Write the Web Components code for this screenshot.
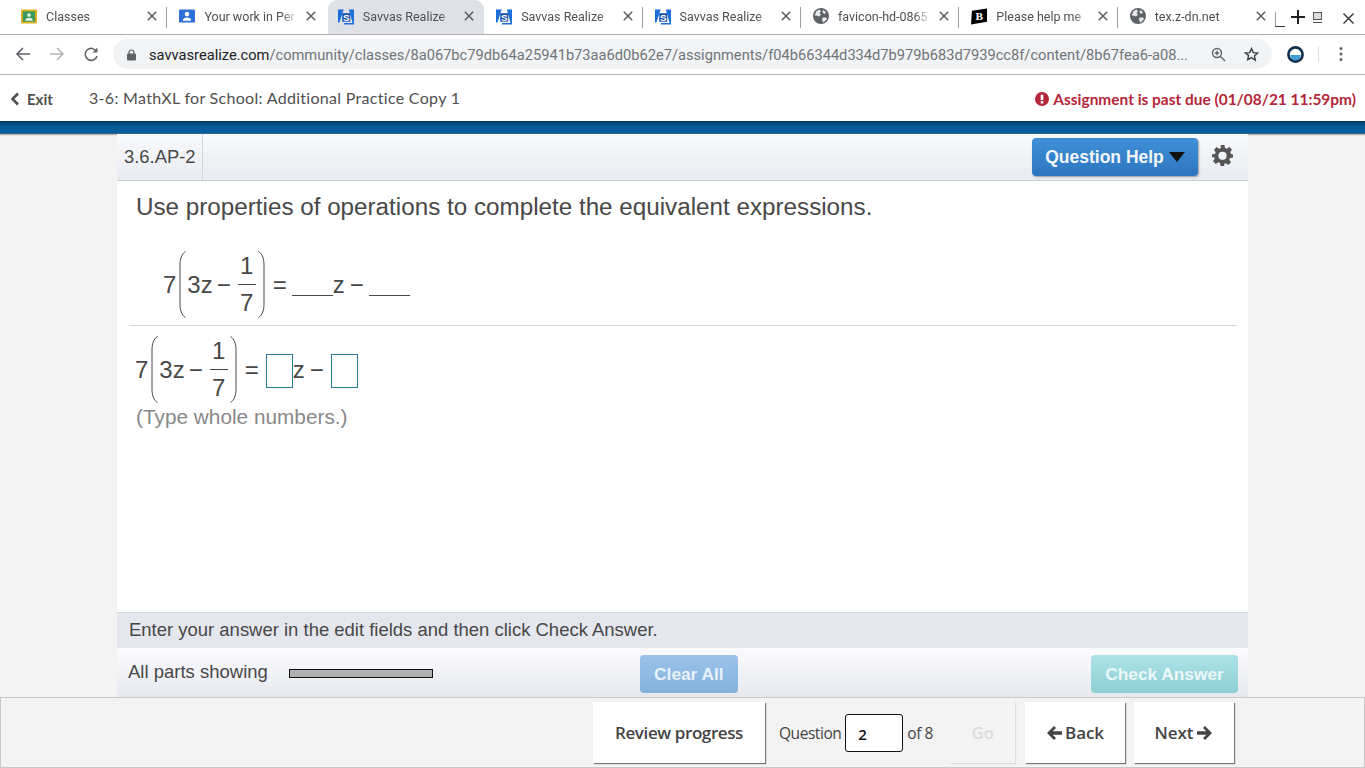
<!DOCTYPE html>
<html lang="en">
<head>
<meta charset="utf-8">
<title>Savvas Realize</title>
<style>
  html, body { margin: 0; height: 768px; overflow: hidden; background: #f3f3f3; }
  body { display: flex; flex-direction: column; font-family: "Liberation Sans", sans-serif; }
</style>
</head>
<body>
  <browser-tabs></browser-tabs>
  <browser-toolbar url-host="savvasrealize.com" url-path="/community/classes/8a067bc79db64a25941b73aa6d0b62e7/assignments/f04b66344d334d7b979b683d7939cc8f/content/8b67fea6-a08..."></browser-toolbar>
  <assignment-header title="3-6: MathXL for School: Additional Practice Copy 1" due="Assignment is past due (01/08/21 11:59pm)"></assignment-header>
  <question-panel code="3.6.AP-2">
    <math-line style="--indent: 28px">
      <math-blank></math-blank><span>z</span><span class="op">−</span><math-blank></math-blank>
    </math-line>
    <math-line slot="answer">
      <math-box></math-box><span>z</span><span class="op">−</span><math-box></math-box>
    </math-line>
  </question-panel>
  <bottom-nav></bottom-nav>

<script>
const ICONS = {
  classroom: `<svg viewBox="0 0 17 15" width="17" height="15"><rect width="17" height="15" rx="1" fill="#e0b020"/><rect x="2" y="2" width="13" height="11" fill="#3a9a5c"/><circle cx="8.500" cy="6" r="1.900" fill="#e8f4ea"/><path d="M4.500 12c0-2.200 1.800-3.200 4-3.200s4 1 4 3.200z" fill="#e8f4ea"/></svg>`,
  person: `<svg viewBox="0 0 17 14" width="17" height="14"><rect width="17" height="14" rx="1" fill="#2f6fd6"/><circle cx="8.500" cy="5" r="2.400" fill="#fff"/><path d="M4 12c0-2.300 2.200-3.400 4.500-3.400S13 9.700 13 12z" fill="#fff"/></svg>`,
  savvas: `<svg viewBox="0 0 17 17" width="17" height="17"><path d="M0 1h6L1.500 15H0z" fill="#1b6fd8"/><path d="M11.500 1H17v16H6l.5-1.500H15.500z" fill="#1b6fd8"/><rect x="4.500" y="5" width="8.500" height="9" fill="#1a50ad"/><text x="8.700" y="13" font-family="Liberation Sans" font-weight="700" font-size="10.500" text-anchor="middle" fill="#fff">S</text></svg>`,
  globe: `<svg viewBox="0 0 16 16" width="16" height="16"><circle cx="8" cy="8" r="8" fill="#5f6368"/><path d="M3.500 3 6.500 1.500 8 3 6.500 5 8 6.500 6 8.500 3.500 7.500 1.700 7.500zM9.500 9.500h3.500l1 1.500L10.500 14.500 9 12zM10 2l3 2-1.500 2L9.500 4.500z" fill="#e8eaed"/></svg>`,
  brainly: `<svg viewBox="0 0 17 17" width="17" height="17"><path d="M1 2.500 17 0v14L0 17z" fill="#000"/><text x="8.800" y="12.500" font-family="Liberation Serif" font-weight="700" font-size="12" text-anchor="middle" fill="#fff">B</text></svg>`,
  close: `<svg viewBox="0 0 10 10" width="10" height="10"><path d="M.8.800 9.200 9.200M9.200.8.800 9.200" stroke="#5a5d60" stroke-width="1.500" fill="none"/></svg>`,
  gear: `<svg viewBox="0 0 24 24" width="23" height="23"><path fill="#555" fill-rule="evenodd" d="M10 1h4l.6 3.100 1.900.8 2.600-1.800 2.800 2.800-1.800 2.600.8 1.900L23 11v3l-3.100.6-.8 1.900 1.800 2.600-2.800 2.800-2.600-1.800-1.900.8L14 23h-4l-.6-3.100-1.900-.8-2.600 1.800-2.800-2.800 1.800-2.600-.8-1.900L1 14v-3l3.100-.6.800-1.900L3.100 5.900l2.800-2.800 2.600 1.800 1.900-.8zM12 8a4.300 4.300 0 1 0 0 8.600A4.300 4.300 0 0 0 12 8z"/></svg>`
};

class BrowserTabs extends HTMLElement {
  connectedCallback() {
    const tabs = [
      ['classroom', 'Classes'],
      ['person', 'Your work in Per'],
      ['savvas', 'Savvas Realize', true],
      ['savvas', 'Savvas Realize'],
      ['savvas', 'Savvas Realize'],
      ['globe', 'favicon-hd-0865'],
      ['brainly', 'Please help me'],
      ['globe', 'tex.z-dn.net']
    ];
    const root = this.attachShadow({ mode: 'open' });
    root.innerHTML = `
      <style>
        :host { display: flex; height: 35px; box-sizing: border-box; padding-left: 8px; background: #fff; border-bottom: 1px solid #a9abad; flex: none; font: 12.500px Roboto, sans-serif; color: #4d5054; }
        .tab { width: 158.4px; flex: none; box-sizing: border-box; display: flex; align-items: center; padding: 0 9px 2px 13px; position: relative; height: 34px; }
        .tab + .tab::before { content: ""; position: absolute; left: 0; top: 7px; height: 21px; width: 1px; background: #9a9da1; }
        .tab.active { z-index: 0; }
        .tab.active::after { content: ""; position: absolute; z-index: -1; inset: 0 -1px 0 3px; background: #dee1e6; border-radius: 9px 9px 0 0; }
        .tab.active::before, .active + .tab::before { display: none; }
        .ico { width: 16px; display: flex; flex: none; margin-right: 9px; }
        .label { flex: 1; overflow: hidden; white-space: nowrap; -webkit-mask-image: linear-gradient(90deg, #000 80%, transparent 97%); mask-image: linear-gradient(90deg, #000 80%, transparent 97%); margin-right: 1px; }
        .x { display: flex; margin-left: 4px; }
        .win { display: flex; align-items: center; flex: 1; height: 34px; }
        .min { width: 9px; height: 14px; border-left: 1px solid #9a9da1; border-bottom: 1px solid #333; margin-top: 4px; flex: none; }
        .plus, .square, .wclose { display: flex; flex: none; }
        .plus { margin-left: 6px; }
        .square { margin-left: 8px; }
        .wclose { margin-left: 21px; margin-top: 2px; }
      </style>
      ${tabs.map(([icon, label, active]) => `
        <div class="tab ${active ? 'active' : ''}">
          <span class="ico">${ICONS[icon]}</span>
          <span class="label">${label}</span>
          <span class="x">${ICONS.close}</span>
        </div>`).join('')}
      <div class="win">
        <span class="min"></span>
        <span class="plus"><svg width="14" height="14" viewBox="0 0 14 14"><path d="M7 0v14M0 7h14" stroke="#222" stroke-width="2"/></svg></span>
        <span class="square"><svg width="9" height="11" viewBox="0 0 9 11"><rect x=".5" y=".5" width="8" height="7" fill="#ddd" stroke="#555"/><path d="M0 10.500h9" stroke="#555"/></svg></span>
        <span class="wclose"><svg width="11" height="11" viewBox="0 0 11 11"><path d="M.5.500l10 10M10.500.5l-10 10" stroke="#333" stroke-width="1.400"/></svg></span>
      </div>`;
  }
}
customElements.define('browser-tabs', BrowserTabs);

class BrowserToolbar extends HTMLElement {
  connectedCallback() {
    const root = this.attachShadow({ mode: 'open' });
    root.innerHTML = `
      <style>
        :host { display: flex; align-items: center; height: 40px; box-sizing: border-box; background: #fff; border-bottom: 1px solid #b0b2b4; flex: none; padding: 0 0 1px 15px; }
        .nav { display: flex; width: 34px; flex: none; }
        .omni { width: 1159px; height: 30px; border-radius: 15px; background: #f1f3f4; display: flex; align-items: center; padding: 1px 13px 0 14px; box-sizing: border-box; flex: none; font: 14.670px Roboto, sans-serif; color: #70757a; }
        .lock { display: flex; margin-right: 13px; }
        .url { flex: 1; white-space: nowrap; overflow: hidden; }
        .url b { font-weight: 400; color: #202124; }
        .end { display: flex; align-items: center; margin-left: 22px; }
        .star { margin-left: 18px; display: flex; }
        .right { display: flex; align-items: center; margin-left: 15px; }
        .div { width: 1px; height: 16px; background: #dadce0; margin: 0 20px 0 14px; }
      </style>
      <span class="nav"><svg width="16" height="16" viewBox="0 0 16 16"><path d="M15 8H2M8 2 2 8l6 6" stroke="#5f6368" stroke-width="1.600" fill="none"/></svg></span>
      <span class="nav"><svg width="16" height="16" viewBox="0 0 16 16"><path d="M1 8h13M8 2l6 6-6 6" stroke="#b4b7ba" stroke-width="1.600" fill="none"/></svg></span>
      <span class="nav" style="width:30px"><svg width="16" height="16" viewBox="0 0 16 16"><path d="M13.500 5.500A6 6 0 1 0 14 10" stroke="#5f6368" stroke-width="1.600" fill="none"/><path d="M14.500 1.500v5h-5z" fill="#5f6368"/></svg></span>
      <div class="omni">
        <span class="lock"><svg width="9" height="12" viewBox="0 0 9 12"><path d="M2 5V3.500a2.500 2.500 0 0 1 5 0V5" stroke="#5f6368" stroke-width="1.200" fill="none"/><rect y="4.500" width="9" height="7" rx="1" fill="#5f6368"/></svg></span>
        <span class="url"><b>${this.getAttribute('url-host')}</b>${this.getAttribute('url-path')}</span>
        <span class="end">
          <svg width="15" height="15" viewBox="0 0 15 15"><circle cx="6" cy="6" r="4.500" stroke="#5f6368" stroke-width="1.400" fill="none"/><path d="M9.500 9.500 14 14M3.800 6h4.400M6 3.800v4.400" stroke="#5f6368" stroke-width="1.400"/></svg>
          <span class="star"><svg width="15" height="15" viewBox="0 0 24 24"><path d="M12 2.500l2.900 6.400 7 .8-5.200 4.700 1.400 6.900L12 17l-6.100 3.300 1.400-6.900L2.100 9.700l7-.8z" stroke="#3c4043" stroke-width="2.200" fill="none"/></svg></span>
        </span>
      </div>
      <div class="right">
        <svg width="17" height="17" viewBox="0 0 18 18"><circle cx="9" cy="9" r="7.500" fill="#fff" stroke="#14304f" stroke-width="2.800"/><path d="M3.500 9.500h11a5.500 5.500 0 0 1-11 0z" fill="#3f9fd8"/></svg>
        <span class="div"></span>
        <svg width="4" height="16" viewBox="0 0 4 16"><circle cx="2" cy="2.500" r="1.500" fill="#5f6368"/><circle cx="2" cy="8" r="1.500" fill="#5f6368"/><circle cx="2" cy="13.500" r="1.500" fill="#5f6368"/></svg>
      </div>`;
  }
}
customElements.define('browser-toolbar', BrowserToolbar);

class AssignmentHeader extends HTMLElement {
  connectedCallback() {
    const root = this.attachShadow({ mode: 'open' });
    root.innerHTML = `
      <style>
        :host { display: block; flex: none; }
        .top { height: 46px; background: #fff; display: flex; align-items: center; padding: 0 9px 0 10px; font-family: Lato, sans-serif; color: #4f4f4f; }
        .exit { display: flex; align-items: center; font-weight: 700; font-size: 15px; width: 79px; flex: none; gap: 7px; padding-top: 2px; box-sizing: border-box; }
        .title { font-size: 16px; flex: 1; letter-spacing: .3px; padding-bottom: 2px; }
        .due { display: flex; align-items: center; gap: 4px; color: #b5263a; font-weight: 700; font-size: 15.450px; padding-top: 2px; }
        .bar { height: 13px; background: linear-gradient(#03385f, #075c9c 45%, #075c9c 90%, #4a6f8e); box-shadow: 0 1px 1px rgba(90,70,50,.4); }
      </style>
      <div class="top">
        <span class="exit"><svg width="10" height="14" viewBox="0 0 10 14"><path d="M8 1.500 2.500 7 8 12.500" stroke="#4f4f4f" stroke-width="2.600" fill="none"/></svg>Exit</span>
        <span class="title">${this.getAttribute('title')}</span>
        <span class="due"><svg width="14" height="14" viewBox="0 0 13 13"><circle cx="6.500" cy="6.500" r="6.500" fill="#b5263a"/><rect x="5.300" y="2.500" width="2.400" height="5" fill="#fff"/><rect x="5.300" y="8.500" width="2.400" height="2.200" fill="#fff"/></svg>${this.getAttribute('due')}</span>
      </div>
      <div class="bar"></div>`;
  }
}
customElements.define('assignment-header', AssignmentHeader);

class MathLine extends HTMLElement {
  connectedCallback() {
    const root = this.attachShadow({ mode: 'open' });
    const paren = flip => `<svg class="paren" width="7" height="67" viewBox="0 0 7 67" style="${flip ? 'transform:scaleX(-1)' : ''}"><path d="M6.500 .5C2.500 3 1 8 1 14v39c0 6 1.500 11 5.500 13.500" stroke="#484848" stroke-width="1" fill="none"/></svg>`;
    root.innerHTML = `
      <style>
        :host { display: flex; align-items: center; height: 68px; margin-left: var(--indent, 0); font: 24px "Liberation Sans", sans-serif; color: #484848; }
        .paren { flex: none; display: block; }
        .seven { margin-right: 3px; padding-top: 2px; }
        .inner { margin: 0 3px 0 1px; padding-top: 2px; }
        .minus { margin: 0 7px 0 1px; padding-top: 2px; }
        .frac { display: flex; flex-direction: column; align-items: center; width: 18px; line-height: 26px; margin-right: 2px; }
        .frac span:first-child { border-bottom: 1px solid #484848; width: 100%; text-align: center; padding-bottom: 5px; }
        .frac span:last-child { padding-top: 5px; }
        .eq { margin: 0 5px 0 8px; padding-top: 2px; }
        .rhs { display: flex; align-items: center; }
        ::slotted(span) { padding-top: 2px; }
        ::slotted(.op) { margin: 0 5px; }
      </style>
      <span class="seven">7</span>
      ${paren(false)}
      <span class="inner">3z</span><span class="minus">−</span>
      <span class="frac"><span>1</span><span>7</span></span>
      ${paren(true)}
      <span class="eq">=</span>
      <span class="rhs"><slot></slot></span>`;
  }
}
customElements.define('math-line', MathLine);

class MathBlank extends HTMLElement {
  constructor() {
    super();
    this.attachShadow({ mode: 'open' }).innerHTML = `<style>:host { display: block; width: 41px; height: 12px; margin-top: 12px; border-bottom: 1.500px solid #484848; box-sizing: border-box; }</style>`;
  }
}
customElements.define('math-blank', MathBlank);

class MathBox extends HTMLElement {
  constructor() {
    super();
    this.attachShadow({ mode: 'open' }).innerHTML = `<style>:host { display: block; width: 27px; height: 34px; margin: 4px 0 0 2px; border: 1px solid #2a7f8f; box-sizing: border-box; background: #fff; }</style>`;
  }
}
customElements.define('math-box', MathBox);

class QuestionPanel extends HTMLElement {
  connectedCallback() {
    const root = this.attachShadow({ mode: 'open' });
    root.innerHTML = `
      <style>
        :host { display: flex; flex-direction: column; flex: 1; width: 1131px; margin-left: 117px; background: #fff; color: #484848; font-family: "Liberation Sans", sans-serif; min-height: 0; }
        .head { height: 47px; flex: none; box-sizing: border-box; display: flex; align-items: center; background: linear-gradient(#f8fafc, #e8ebf0); border-bottom: 1px solid #ccd0d5; padding-right: 14px; }
        .code { font-size: 18.400px; padding: 0 6px 0 7px; height: 100%; display: flex; align-items: center; border-right: 1px solid #d4d6da; flex: none; box-sizing: border-box; }
        .help { margin-left: auto; height: 38px; width: 166px; box-sizing: border-box; border-radius: 4px; background: linear-gradient(#4090d8, #2c76bf); box-shadow: 1px 1px 2px rgba(0,0,0,.35); color: #f2f6fb; font-weight: 700; font-size: 17.500px; display: flex; align-items: center; justify-content: center; gap: 5px; }
        .help i { border: 8px solid transparent; border-top: 10px solid #111; border-bottom: 0; width: 0; height: 0; }
        .gear { display: flex; margin: -3px 0 0 13px; }
        .body { flex: 1; padding: 0 11px 0 12px; display: flex; flex-direction: column; min-height: 0; }
        .prompt { font-size: 24.230px; line-height: 28px; margin: 12px 0 29px 7px; flex: none; }
        .given { padding-bottom: 7px; border-bottom: 1px solid #d4d6da; margin-bottom: 9px; padding-left: 6px; }
        .answer { padding-left: 6px; }
        .hint { font-size: 20.800px; color: #888; margin: 2px 0 0 7px; }
        .msg { height: 36px; flex: none; background: #e4e7ee; border-top: 1px solid #d4d8de; box-sizing: border-box; font-size: 18.480px; padding: 0 0 2px 12px; display: flex; align-items: center; }
        .actions { height: 49px; flex: none; box-sizing: border-box; background: linear-gradient(#fbfbfd, #e7e9ef); display: flex; align-items: center; padding: 2px 10px 0 11px; }
        .parts { font-size: 18.500px; padding-bottom: 3px; }
        .progress { width: 144px; height: 9px; box-sizing: border-box; border: 1.500px solid #111; background: #b0b0b0; margin: 0 207px 0 21px; flex: none; }
        .btn { height: 38px; padding-top: 1px; border-radius: 4px; color: rgba(255,255,255,.82); font-weight: 700; font-size: 17.300px; display: flex; align-items: center; justify-content: center; box-sizing: border-box; }
        .clear { width: 98px; background: linear-gradient(#9cc3ea, #82b2dd); }
        .check { width: 147px; margin-left: auto; background: linear-gradient(#abe3e7, #8fcfd3); }
      </style>
      <div class="head">
        <div class="code">${this.getAttribute('code')}</div>
        <div class="help">Question Help <i></i></div>
        <div class="gear">${ICONS.gear}</div>
      </div>
      <div class="body">
        <div class="prompt">Use properties of operations to complete the equivalent expressions.</div>
        <div class="given"><slot></slot></div>
        <div class="answer"><slot name="answer"></slot></div>
        <div class="hint">(Type whole numbers.)</div>
      </div>
      <div class="msg">Enter your answer in the edit fields and then click Check Answer.</div>
      <div class="actions">
        <span class="parts">All parts showing</span>
        <span class="progress"></span>
        <span class="btn clear">Clear All</span>
        <span class="btn check">Check Answer</span>
      </div>`;
  }
}
customElements.define('question-panel', QuestionPanel);

class BottomNav extends HTMLElement {
  connectedCallback() {
    const root = this.attachShadow({ mode: 'open' });
    const arrow = flip => `<svg width="16" height="16" viewBox="0 0 16 16" style="${flip ? 'transform:scaleX(-1)' : ''}"><path d="M8 1 1 8l7 7 2-2-3.300-3.300H16V6.300H6.700L10 3z" fill="#444"/></svg>`;
    root.innerHTML = `
      <style>
        :host { display: flex; align-items: center; height: 71px; flex: none; box-sizing: border-box; background: #f3f3f3; border: 1px solid #c8c8c8; padding: 0 129px 0 592px; font-family: "Open Sans", sans-serif; color: #444; white-space: nowrap; }
        .b { height: 61px; display: flex; align-items: center; justify-content: center; background: #fff; font-weight: 600; font-size: 17px; letter-spacing: -.4px; box-sizing: border-box; box-shadow: 1px 1px 1px #777; gap: 3px; flex: none; }
        .review { width: 172px; }
        .q { font-size: 15.500px; letter-spacing: -.45px; margin-left: 14px; flex: none; }
        .field { width: 58px; height: 38px; box-sizing: border-box; border: 1px solid #111; border-radius: 3px; background: #fff; margin: 0 4px; font-size: 15px; font-weight: 600; color: #111; display: flex; align-items: center; padding: 2px 0 0 12px; flex: none; }
        .go { width: 65px; margin-left: 17px; background: #f4f4f4; color: #dcdcdc; box-shadow: 1px 1px 1px #ddd; }
        .back { width: 100px; margin-left: 10px; letter-spacing: -.1px; }
        .next { width: 100px; margin-left: 9px; letter-spacing: -.1px; gap: 4px; }
      </style>
      <span class="b review">Review progress</span>
      <span class="q">Question</span>
      <span class="field">2</span>
      <span class="q" style="margin-left:0">of 8</span>
      <span class="b go">Go</span>
      <span class="b back">${arrow(false)}Back</span>
      <span class="b next">Next${arrow(true)}</span>`;
  }
}
customElements.define('bottom-nav', BottomNav);
</script>
</body>
</html>
